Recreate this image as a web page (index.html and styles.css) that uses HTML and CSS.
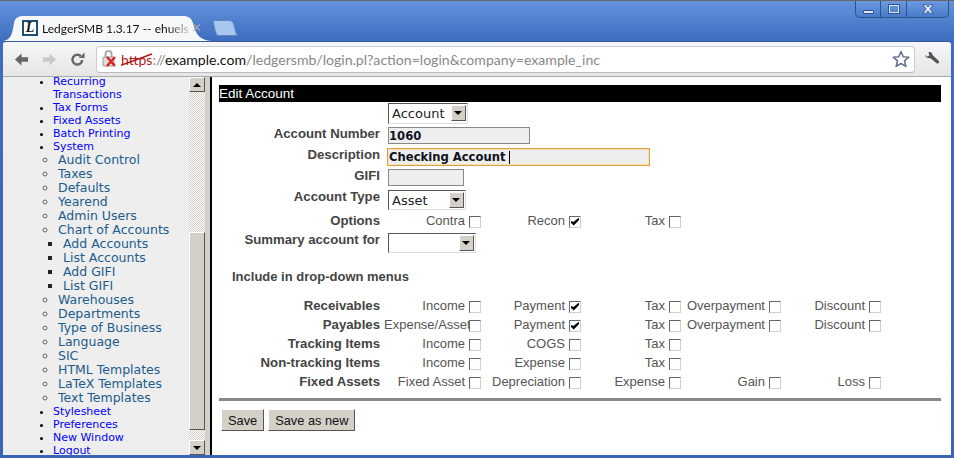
FILE: index.html
```html
<!DOCTYPE html>
<html lang="en">
<head>
	<meta charset="UTF-8">
	<title>LedgerSMB</title>
	<link rel="stylesheet" href="styles.css">
</head>
<body>
	<div class="window">
		<div class="tabstrip">
			<div class="tab">
				<svg class="tabshape" width="208" height="25" viewBox="0 0 208 25"><path d="M0 25C7 24 9 20 11 7C12 2 15 0 20 0H180C186 0 188 2 190 7C193 20 198 24 208 25Z" fill="#f6f7f8"/></svg>
				<span class="favicon">L</span>
				<span class="tabtitle">LedgerSMB 1.3.17 -- ehuelsma</span>
				<span class="tabclose">×</span>
			</div>
			<svg class="newtab" width="26" height="16" viewBox="0 0 26 16"><path d="M1 .5H17C20 .5 21 2 22 5C23 10 24 14 25.500 15.500H7C5 15.500 4 14 3 10Z" fill="#a9c6ef" stroke="#5c87c9"/></svg>
			<div class="wincontrols">
				<span class="winbtn minbtn"><i></i></span>
				<span class="winbtn maxbtn"><i></i></span>
				<span class="winbtn closebtn">
					<svg width="12" height="10" viewBox="0 0 12 10"><path d="M1 .5h3l2 2.500 2-2.500h3L8 5l3 4.500H8L6 7 4 9.500H1L4 5Z" fill="#dbe7f8" stroke="#2f5288" stroke-width=".8"/></svg>
				</span>
			</div>
		</div>
		<div class="toolbar">
			<svg class="navicon" width="15" height="15" viewBox="0 0 16 16"><path d="M8 1.500 1 8l7 6.500V10.500h7v-5H8Z" fill="#666"/></svg>
			<svg class="navicon" width="15" height="15" viewBox="0 0 16 16"><path d="M8 1.500 15 8l-7 6.500V10.500H1v-5h7Z" fill="#c9c9c9"/></svg>
			<svg class="navicon" width="15" height="15" viewBox="0 0 16 16"><path d="M13 8.500A5.200 5.200 0 1 1 11.500 4.500" fill="none" stroke="#666" stroke-width="2.600"/><path d="M9.500 6.500h6v-6Z" fill="#666"/></svg>
			<div class="omnibox">
				<span class="secure">
					<svg width="20" height="20" viewBox="0 0 20 20"><rect x="2" y="8" width="11" height="9" rx="1" fill="#ddd" stroke="#999"/><path d="M4.500 8V5a3 3 0 0 1 6 0v3" fill="none" stroke="#aaa" stroke-width="2"/><path d="M6 8l8 9M14 8l-8 9" stroke="#d22" stroke-width="2.400"/></svg>
				</span>
				<span class="url"><span class="scheme">https<svg class="strike" width="34" height="14" viewBox="0 0 34 14"><path d="M0 13 33 1" stroke="#b01818" stroke-width="1.400"/></svg></span><span class="slashes">://</span><span class="host">example.com</span><span class="path">/ledgersmb/login.pl?action=login&amp;company=example_inc</span></span>
				<svg class="star" width="18" height="18" viewBox="0 0 18 18"><path d="M9 1.500 11.200 6.700 16.800 7.200 12.500 10.900 13.900 16.400 9 13.500 4.100 16.400 5.500 10.900 1.200 7.200 6.800 6.700Z" fill="#fff" stroke="#62738f" stroke-width="1.600" stroke-linejoin="round"/></svg>
			</div>
			<svg class="wrench" width="16" height="16" viewBox="0 0 18 18"><path d="M1 4.500 4 6.500 6 5 5 1.500C7.500.5 9.500 2 9.500 4.500L16.500 11c1.500 1.500-.5 4-2.300 2.800L7 8C4 8.500 1.500 7 1 4.500Z" fill="#555"/></svg>
		</div>
		<div class="content">
			<div class="menuframe">
				<div class="menu">
					<ul class="level1">
						<li><a href="#">Recurring<br>Transactions</a></li>
						<li><a href="#">Tax Forms</a></li>
						<li><a href="#">Fixed Assets</a></li>
						<li><a href="#">Batch Printing</a></li>
						<li><a href="#">System</a>
							<ul class="level2">
								<li>Audit Control</li>
								<li>Taxes</li>
								<li>Defaults</li>
								<li>Yearend</li>
								<li>Admin Users</li>
								<li>Chart of Accounts
									<ul class="level3">
										<li>Add Accounts</li>
										<li>List Accounts</li>
										<li>Add GIFI</li>
										<li>List GIFI</li>
									</ul>
								</li>
								<li>Warehouses</li>
								<li>Departments</li>
								<li>Type of Business</li>
								<li>Language</li>
								<li>SIC</li>
								<li>HTML Templates</li>
								<li>LaTeX Templates</li>
								<li>Text Templates</li>
							</ul>
						</li>
						<li><a href="#">Stylesheet</a></li>
						<li><a href="#">Preferences</a></li>
						<li><a href="#">New Window</a></li>
						<li><a href="#">Logout</a></li>
					</ul>
				</div>
				<div class="scrollbar">
					<span class="sbtn"><i class="up"></i></span>
					<span class="strack grow"></span>
					<span class="sthumb"></span>
					<span class="strack"></span>
					<span class="sbtn"><i class="down"></i></span>
				</div>
			</div>
			<div class="splitter"></div>
			<form class="mainframe">
				<div class="heading">Edit Account</div>
				<div class="field f-type">
					<label class="lbl"></label>
					<div class="select s-account"><span>Account</span><i class="arrow"></i></div>
				</div>
				<div class="field f-number">
					<label class="lbl">Account Number</label>
					<input class="text w-number" value="1060">
				</div>
				<div class="field f-desc">
					<label class="lbl">Description</label>
					<div class="text focus">Checking Account <i class="caret"></i></div>
				</div>
				<div class="field f-gifi">
					<label class="lbl">GIFI</label>
					<input class="text w-gifi">
				</div>
				<div class="field f-acct">
					<label class="lbl">Account Type</label>
					<div class="select s-asset"><span>Asset</span><i class="arrow"></i></div>
				</div>
				<div class="checks f-options">
					<div class="lbl">Options</div>
					<label class="chk">Contra <input type="checkbox"></label>
					<label class="chk">Recon <input type="checkbox" checked></label>
					<label class="chk">Tax <input type="checkbox"></label>
				</div>
				<div class="field f-summary">
					<label class="lbl">Summary account for</label>
					<div class="select s-summary"><span></span><i class="arrow"></i></div>
				</div>
				<div class="subhead">Include in drop-down menus</div>
				<div class="checks">
					<div class="lbl">Receivables</div>
					<label class="chk">Income <input type="checkbox"></label>
					<label class="chk">Payment <input type="checkbox" checked></label>
					<label class="chk">Tax <input type="checkbox"></label>
					<label class="chk">Overpayment <input type="checkbox"></label>
					<label class="chk">Discount <input type="checkbox"></label>
				</div>
				<div class="checks">
					<div class="lbl">Payables</div>
					<label class="chk"><span class="cut">Expense/Asset</span><input type="checkbox"></label>
					<label class="chk">Payment <input type="checkbox" checked></label>
					<label class="chk">Tax <input type="checkbox"></label>
					<label class="chk">Overpayment <input type="checkbox"></label>
					<label class="chk">Discount <input type="checkbox"></label>
				</div>
				<div class="checks">
					<div class="lbl">Tracking Items</div>
					<label class="chk">Income <input type="checkbox"></label>
					<label class="chk">COGS <input type="checkbox"></label>
					<label class="chk">Tax <input type="checkbox"></label>
				</div>
				<div class="checks">
					<div class="lbl">Non-tracking Items</div>
					<label class="chk">Income <input type="checkbox"></label>
					<label class="chk">Expense <input type="checkbox"></label>
					<label class="chk">Tax <input type="checkbox"></label>
				</div>
				<div class="checks">
					<div class="lbl">Fixed Assets</div>
					<label class="chk">Fixed Asset <input type="checkbox"></label>
					<label class="chk">Depreciation <input type="checkbox"></label>
					<label class="chk">Expense <input type="checkbox"></label>
					<label class="chk">Gain <input type="checkbox"></label>
					<label class="chk">Loss <input type="checkbox"></label>
				</div>
				<div class="rule"></div>
				<div class="buttons">
					<button type="button">Save</button>
					<button type="button">Save as new</button>
				</div>
			</form>
		</div>
	</div>
</body>
</html>
```

FILE: styles.css
```css
*{margin: 0; padding: 0; box-sizing: border-box;}
html, body{width: 954px; height: 458px; overflow: hidden;}
body{font-family: "Liberation Sans", Arial, sans-serif; font-size: 13px; color: #444; background: #3f6dbd;}

.window{height: 458px; padding: 0 3px 3px 3px; display: flex; flex-direction: column; border-top: 1px solid #666; background: linear-gradient(#6393dc 0, #3d6bbf 41px, #3a66b4 100%);}

/* tabs */
.tabstrip{height: 40px; flex: none; display: flex; align-items: flex-end; position: relative;}
.tab{position: relative; width: 208px; height: 25px; flex: none; display: flex; align-items: center; padding: 0 0 1px 19px;}
.tabshape{position: absolute; left: 0; top: 0;}
.favicon{position: relative; width: 16px; height: 16px; flex: none; background: #fff; border: 2px solid #1d4f78; font: italic bold 14px/12px "Liberation Serif", serif; color: #111; text-align: center;}
.tabtitle{position: relative; width: 146px; flex: none; margin-left: 4px; overflow: hidden; white-space: nowrap; font: 12px Lato, sans-serif; color: #111; mask-image: linear-gradient(90deg, #000 85%, rgba(0,0,0,.25));}
.tabclose{position: relative; margin-left: 4px; font: 16px "Liberation Sans", sans-serif; color: #aaa;}
.newtab{margin: 0 0 5px 1px; flex: none;}
.wincontrols{position: absolute; right: 2px; top: 0; display: flex; height: 17px; border: 1px solid #2f5288; border-top: none; border-radius: 0 0 5px 5px; background: linear-gradient(#6b9ae0, #4a7bcb);}
.winbtn{display: flex; align-items: center; justify-content: center; height: 16px; border-right: 1px solid #2f5288;}
.winbtn:last-child{border-right: none;}
.minbtn{width: 25px;}
.minbtn i{width: 11px; height: 4px; margin-top: 6px; background: #dbe7f8; border: 1px solid #2f5288; border-radius: 1px;}
.maxbtn{width: 26px;}
.maxbtn i{width: 12px; height: 10px; border: 2px solid #dbe7f8; outline: 1px solid #2f5288; outline-offset: -1px;}
.closebtn{width: 41px;}

/* toolbar */
.toolbar{height: 36px; flex: none; display: flex; align-items: center; background: linear-gradient(#f6f7f9, #e6e6e6); border-top: 1px solid #35599c; border-bottom: 1px solid #a9a9b0; border-radius: 3px 3px 0 0;}
.navicon{margin-left: 11px; flex: none;}
.navicon + .navicon{margin-left: 13px;}
.omnibox{width: 819px; height: 27px; margin-left: 11px; flex: none; display: flex; align-items: center; background: #fff; border: 1px solid #ccc; border-bottom-color: #bbb; border-radius: 4px; padding-left: 4px; font: 14.100px Lato, sans-serif; color: #111;}
.secure{width: 20px; height: 20px; flex: none;}
.url{white-space: nowrap; flex: 1; overflow: hidden;}
.scheme{position: relative; color: #b01818;}
.strike{position: absolute; left: -2px; top: 2px;}
.slashes{color: #888;}
.path{color: #888;}
.star{margin-right: 4px; flex: none;}
.wrench{margin-left: 9px; flex: none;}

/* frames */
.content{flex: 1; display: flex; min-height: 0; background: #fff;}
.menuframe{width: 202px; flex: none; display: flex; background: #eee; overflow: hidden;}
.menu{width: 186px; flex: none; overflow: hidden; font: 11px/13px "DejaVu Sans", Verdana, sans-serif; color: #000;}
.menu a{color: #00f; text-decoration: none;}
.level1{list-style-type: disc; padding-left: 50px; margin-top: -2px;}
.level2{list-style-type: circle; padding-left: 5px; color: #1b5c8c; font-size: 12.500px; line-height: 14px;}
.level2 li::marker{color: #666;}
.level3{list-style-type: square; padding-left: 5px;}
.level3 li::marker{color: #222;}
.scrollbar{width: 16px; flex: none; display: flex; flex-direction: column; background: #d4d0c8;}
.sbtn{height: 15px; flex: none; display: flex; align-items: center; justify-content: center; background: #d4d0c8; border: 1px solid; border-color: #fff #555 #555 #fff;}
.sbtn .up, .sbtn .down{width: 0; height: 0; border: 4px solid transparent;}
.sbtn .up{border-top: none; border-bottom-color: #000;}
.sbtn .down{border-bottom: none; border-top-color: #000;}
.strack{height: 10px; flex: none; background: repeating-conic-gradient(#d4d0c8 0 25%, #fff 0 50%) 0 0 / 2px 2px;}
.strack.grow{height: auto; flex: 1;}
.sthumb{height: 198px; flex: none; background: #d4d0c8; border: 1px solid; border-color: #fff #555 #555 #fff;}
.splitter{width: 6px; flex: none; background: #d4d0c8; border-right: 1px solid #000;}

/* main form */
.mainframe{flex: 1; padding: 8px 10px 0 7px; min-width: 0; border-left: 1px solid #000;}
.heading{height: 17px; background: #000; color: #fff; font-size: 13.500px; line-height: 18px;}
.field{display: flex; align-items: flex-start; margin-top: 1px;}
.lbl{width: 161px; flex: none; text-align: right; font-weight: bold; font-size: 13.200px; line-height: 13px; color: #444;}
.select, .text{margin-left: 8px;}
.select{display: flex; height: 21px; justify-content: space-between; background: #fff; border: 1px solid; border-color: #555 #ddd #ddd #555; padding: 2px 1px 0 3px; font: 13px "DejaVu Sans", sans-serif; color: #222;}
.s-account{width: 80px;}
.s-asset{width: 78px; height: 20px; padding-top: 2px;}
.s-summary{width: 88px; height: 20px;}
.arrow{width: 15px; height: 16px; margin-top: -1px; flex: none; background: #d4d0c8; border: 1px solid; border-color: #fff #555 #555 #fff; position: relative;}
.arrow::after{content: ""; position: absolute; left: 2px; top: 5px; border: 4px solid transparent; border-bottom: none; border-top-color: #000;}
.text{display: block; height: 17px; background: #eee; border: 1px solid #888; padding: 1px 0; font: bold 11.600px/13px "DejaVu Sans", sans-serif; color: #112; outline: none;}
.w-number{width: 142px;}
.w-gifi{width: 76px;}
.focus{width: 263px; margin-left: 7px; height: 18px; border-color: #dfa040; box-shadow: 0 0 0 1px #f6e0b8 inset; padding: 2px 1px 0;}
.caret{display: inline-block; width: 1px; height: 13px; margin-left: -1px; background: #000; vertical-align: top;}
.f-number{margin-top: 3px;}
.f-desc{margin-top: 4px;}
.f-gifi{margin-top: 3px;}
.f-acct{margin-top: 4px;}
.f-options{margin-top: 1px;}
.f-summary{margin-top: 3px;}

.checks{display: flex; height: 19px; align-items: center;}
.checks .lbl{margin-right: 1px;}
.chk{width: 100px; flex: none; display: flex; justify-content: flex-end; align-items: center; gap: 4px; font-size: 13px; color: #555; white-space: nowrap;}
.chk .cut{margin-right: -4px; width: 85px; overflow: hidden; text-align: left; flex: none;}
.chk input{appearance: none; width: 12px; height: 12px; flex: none; background: #fff; border: 1px solid; border-color: #666 #d4d0c8 #d4d0c8 #666; position: relative; top: 1px;}
.chk input:checked::after{content: ""; position: absolute; left: 1px; top: 1px; width: 8px; height: 8px; background: #000; clip-path: polygon(0 45%, 30% 55%, 100% 0, 100% 30%, 35% 100%, 0 70%);}
.subhead{margin: 14px 0 10px 13px; height: 19px; font-weight: bold; font-size: 13px; line-height: 19px; color: #444;}
.rule{height: 3px; margin-top: 7px; background: #888;}
.buttons{display: flex; gap: 4px; margin: 8px 0 0 2px;}
button{height: 22px; padding: 0 6px; background: #d4d0c8; border: 1px solid; border-color: #fff #555 #555 #fff; font: 12.800px "Liberation Sans", sans-serif; color: #111;}
```
